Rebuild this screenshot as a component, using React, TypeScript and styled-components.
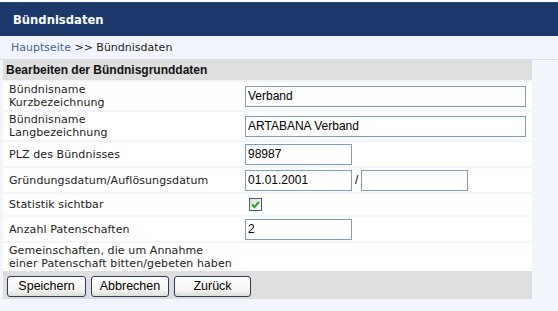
import React from "react";
import styled, { createGlobalStyle } from "styled-components";

const Global = createGlobalStyle`
  html, body { margin: 0; padding: 0; }
  body {
    background: #f2f6fc;
    font-family: "DejaVu Sans", Verdana, sans-serif;
    color: #1a1a1a;
  }
`;

const Page = styled.div`
  border-top: 2px solid #ffffff;
  width: 558px;
  height: 309px;
  overflow: hidden;
`;

const TitleBar = styled.div`
  height: 34px;
  background: #1b3a6b;
  border-top: 1px solid #2a4a7a;
  box-sizing: border-box;
  padding-left: 13px;
  display: flex;
  align-items: center;
  color: #ffffff;
  font-weight: bold;
  font-size: 11.6px;
`;

const Crumbs = styled.div`
  height: 23px;
  border-bottom: 1px solid #d4dbe6;
  padding-left: 11px;
  font-size: 11px;
  line-height: 23px;
  color: #1a1a1a;
`;

const CrumbLink = styled.a`
  color: #46678e;
  text-decoration: none;
`;

const Form = styled.div`
  margin-left: 3px;
  width: 529px;
  display: grid;
  row-gap: 2px;
`;

const SectionHead = styled.div`
  height: 20px;
  background: #dedede;
  padding-left: 3px;
  font-family: "Liberation Sans", Arial, sans-serif;
  font-weight: bold;
  font-size: 12px;
  line-height: 20px;
  color: #111;
`;

const Row = styled.div<{ $h: number }>`
  display: grid;
  grid-template-columns: 239px 1fr;
  align-items: center;
  height: ${(p) => p.$h}px;
  background: #ffffff;
`;

const Label = styled.div`
  padding-left: 6px;
  font-size: 11px;
  letter-spacing: 0.1px;
  line-height: 13px;
  color: #222;
`;

const Field = styled.div`
  padding-left: 3px;
  display: flex;
  align-items: center;
`;

const TextInput = styled.input<{ $w: number }>`
  width: ${(p) => p.$w}px;
  height: 21px;
  box-sizing: border-box;
  border: 1px solid #7f9db9;
  padding: 0 2px;
  margin: 0;
  font-family: "Liberation Sans", Arial, sans-serif;
  font-size: 12px;
  color: #000;
  background: #fff;
  outline: none;
`;

const Slash = styled.span`
  font-family: "Liberation Sans", Arial, sans-serif;
  font-size: 12px;
  margin: 0 3px 0 3px;
  color: #000;
`;

const Check = styled.span`
  margin-left: 4px;
  width: 13px;
  height: 13px;
  box-sizing: border-box;
  border: 1px solid #3f5f7f;
  background: linear-gradient(135deg, #dcdcd6, #ffffff);
  display: inline-flex;
  align-items: center;
  justify-content: center;
`;

const ButtonBar = styled.div`
  height: 28px;
  background: #dedede;
  display: flex;
  align-items: center;
  gap: 5px;
  padding-left: 4px;
  padding-top: 2px;
  box-sizing: border-box;
`;

const Button = styled.button<{ $w: number }>`
  width: ${(p) => p.$w}px;
  height: 21px;
  box-sizing: border-box;
  border: 1px solid #2b3f5c;
  border-radius: 3px;
  background: linear-gradient(#ffffff, #f4f4f2 70%, #dcdcd6);
  font-family: "Liberation Sans", Arial, sans-serif;
  font-size: 12.5px;
  color: #000;
  padding: 0;
  margin: 0;
`;

export default function App() {
  return (
    <>
      <Global />
      <Page>
        <TitleBar>Bündnisdaten</TitleBar>
        <Crumbs>
          <CrumbLink href="#">Hauptseite</CrumbLink> &gt;&gt; Bündnisdaten
        </Crumbs>
        <Form>
          <SectionHead>Bearbeiten der Bündnisgrunddaten</SectionHead>
          <Row $h={28}>
            <Label>
              Bündnisname
              <br />
              Kurzbezeichnung
            </Label>
            <Field>
              <TextInput $w={281} defaultValue="Verband" readOnly />
            </Field>
          </Row>
          <Row $h={28}>
            <Label>
              Bündnisname
              <br />
              Langbezeichnung
            </Label>
            <Field>
              <TextInput $w={281} defaultValue="ARTABANA Verband" readOnly />
            </Field>
          </Row>
          <Row $h={24}>
            <Label>PLZ des Bündnisses</Label>
            <Field>
              <TextInput $w={107} defaultValue="98987" readOnly />
            </Field>
          </Row>
          <Row $h={24}>
            <Label>Gründungsdatum/Auflösungsdatum</Label>
            <Field>
              <TextInput $w={107} defaultValue="01.01.2001" readOnly />
              <Slash>/</Slash>
              <TextInput $w={107} defaultValue="" readOnly />
            </Field>
          </Row>
          <Row $h={21}>
            <Label>Statistik sichtbar</Label>
            <Field>
              <Check>
                <svg width="9" height="9" viewBox="0 0 9 9">
                  <path
                    d="M1 4.5 L3.5 7 L8 1.8"
                    fill="none"
                    stroke="#2f9a2f"
                    strokeWidth="2"
                  />
                </svg>
              </Check>
            </Field>
          </Row>
          <Row $h={24}>
            <Label>Anzahl Patenschaften</Label>
            <Field>
              <TextInput $w={107} defaultValue="2" readOnly />
            </Field>
          </Row>
          <Row $h={28}>
            <Label>
              Gemeinschaften, die um Annahme
              <br />
              einer Patenschaft bitten/gebeten haben
            </Label>
            <Field />
          </Row>
        </Form>
        <Form>
          <ButtonBar>
            <Button $w={79}>Speichern</Button>
            <Button $w={78}>Abbrechen</Button>
            <Button $w={77}>Zurück</Button>
          </ButtonBar>
        </Form>
      </Page>
    </>
  );
}
